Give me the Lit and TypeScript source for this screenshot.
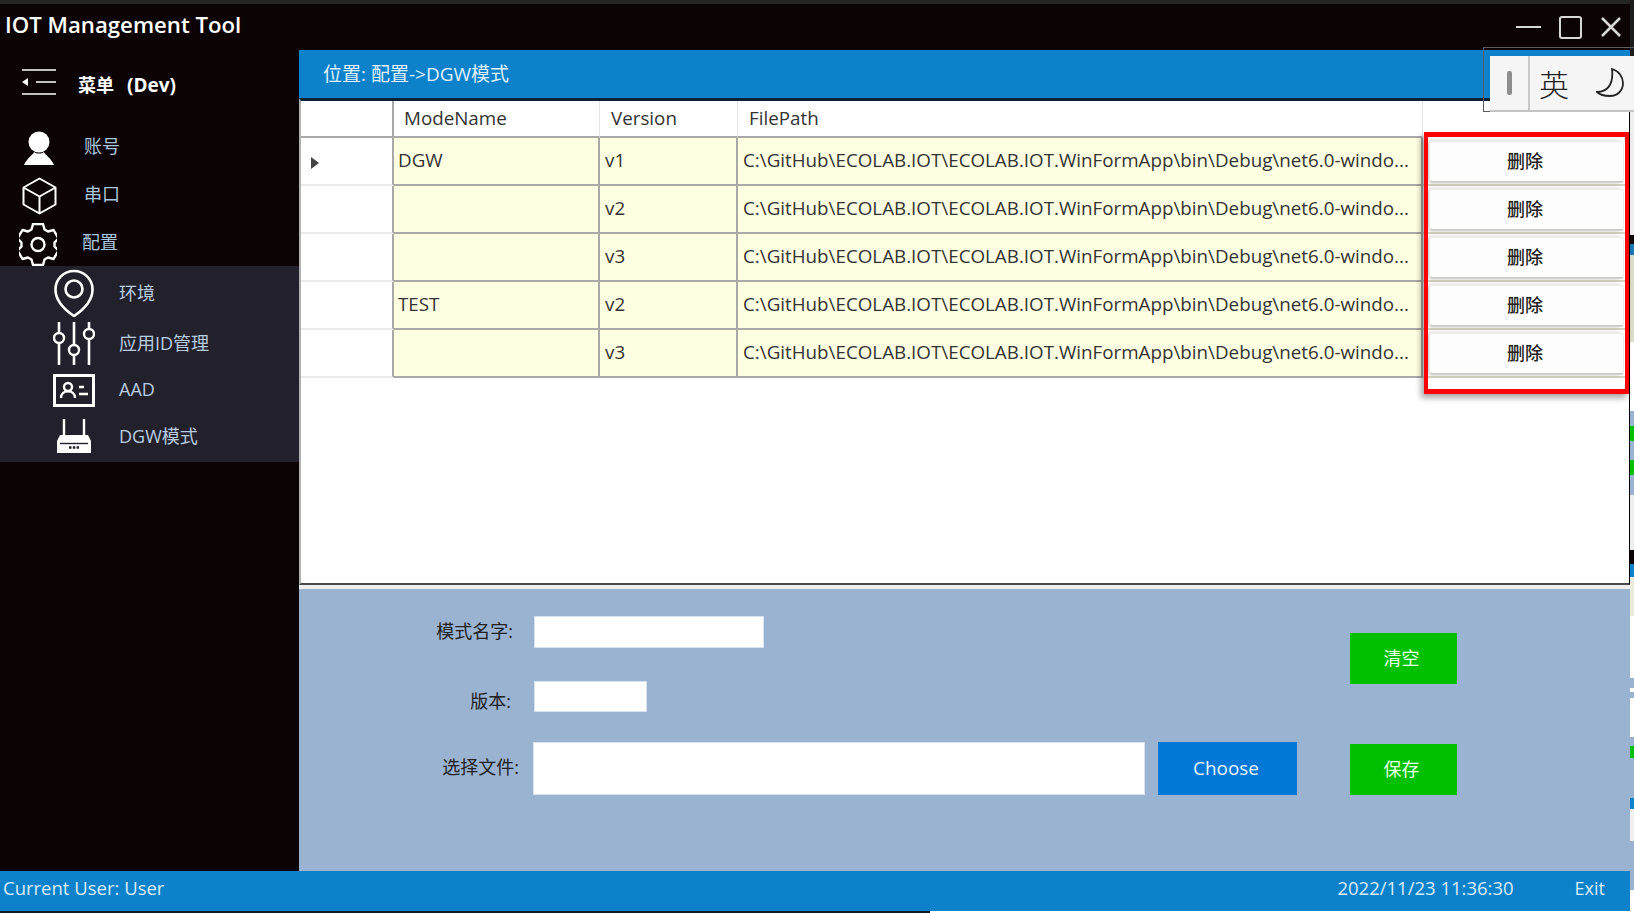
import { LitElement, html, css, svg } from 'lit';
import { customElement } from 'lit/decorators.js';

const FILE_PATH = 'C:\\GitHub\\ECOLAB.IOT\\ECOLAB.IOT.WinFormApp\\bin\\Debug\\net6.0-windo...';

const ROWS = [
  { name: 'DGW', version: 'v1', current: true },
  { name: '', version: 'v2' },
  { name: '', version: 'v3' },
  { name: 'TEST', version: 'v2' },
  { name: '', version: 'v3' },
];

// Trozo de otra ventana que asoma por la derecha: [alto, color]
const PEEK: [number, string][] = [
  [112, '#1d1d1d'], [125, '#efefef'], [9, '#140808'], [12, '#1a78b8'], [87, '#dcdccb'],
  [70, '#ffffff'], [15, '#9ab3d1'], [15, '#00c000'], [20, '#9ab3d1'], [15, '#00c000'],
  [20, '#9ab3d1'], [55, '#eeeeee'], [15, '#0c0404'], [13, '#0e81cb'], [39, '#ecebdc'],
  [63, '#ffffff'], [10, '#9ab3d1'], [4, '#ffffff'], [6, '#9ab3d1'], [39, '#ffffff'],
  [9, '#9ab3d1'], [12, '#00c000'], [41, '#9ab3d1'], [11, '#0e81cb'], [32, '#f0f0f0'],
  [50, '#9ab3d1'], [23, '#ffffff'],
];

const ICONS = {
  menu: svg`<path d="M0 1h34M14 13h20M0 25h34" stroke-width="1.6"/><path d="M6 9v8l-6-4z" fill="currentColor" stroke="none"/>`,
  user: svg`<circle cx="15" cy="11" r="10.500" fill="currentColor" stroke="none"/><path d="M10 21C9 24 3 27 0 34h30c-3-7-9-10-10-13-3 2-7 2-10 0z" fill="currentColor" stroke="none"/>`,
  box: svg`<path d="M17.500 1.500l16 9v17l-16 9-16-9v-17zM1.500 10.500l16 9 16-9M17.500 19.500v17" stroke-width="2" stroke-linejoin="round"/>`,
  gear: svg`<path d="M14 1h10l1.500 5.500 3.500 2 5.500-1.500 5 8.500-4 4v4l4 4-5 8.500-5.500-1.500-3.500 2-1.500 5.500h-10l-1.500-5.500-3.500-2-5.500 1.500-5-8.500 4-4v-4l-4-4 5-8.500 5.500 1.500 3.500-2z" stroke-width="2.400" stroke-linejoin="round"/><circle cx="19" cy="21.500" r="6.500" stroke-width="2.400"/>`,
  pin: svg`<path d="M20 47C8 39 1.500 31 1.500 20.500a18.500 18.500 0 0 1 37 0C38.500 31 32 39 20 47z" stroke-width="2.600"/><circle cx="20" cy="20" r="8.500" stroke-width="2.600"/>`,
  sliders: svg`<path d="M6 0v11M6 21v22M21 0v23M21 33v10M36 0v7M36 17v26" stroke-width="2.600"/><circle cx="6" cy="16" r="5" stroke-width="2.400"/><circle cx="21" cy="28" r="5" stroke-width="2.400"/><circle cx="36" cy="12" r="5" stroke-width="2.400"/>`,
  card: svg`<rect x="1.500" y="1.500" width="39" height="30" stroke-width="3"/><circle cx="15" cy="13" r="4" stroke-width="2.400"/><path d="M8 24c0-9 14-9 14 0M26 13h5M26 20h9" stroke-width="2.400"/>`,
  router: svg`<path d="M7 0v16M27 0v16" stroke-width="2.400"/><path d="M3 16h28l3 6v12H0V22z" fill="currentColor" stroke="none"/><path d="M3 24.500h28" stroke="#22202a" stroke-width="1.400"/><path d="M12 28.500h10" stroke="#22202a" stroke-width="2.400" stroke-dasharray="2.500 1.300"/>`,
};

@customElement('app-root')
export class AppRoot extends LitElement {
  static styles = css`
    :host {
      display: block;
      position: relative;
      width: 1634px;
      height: 913px;
      overflow: hidden;
      background: #fff;
      font-family: "Open Sans", "Noto Sans CJK SC", sans-serif;
      font-size: 18px;
    }

    .shell {
      display: flex;
      height: 100%;
    }
    .window {
      flex: 0 0 1630px;
      display: flex;
      flex-direction: column;
      background: #0c0404;
    }

    /* Barra superior */
    .top-strip {
      flex: 0 0 4px;
      background: #252525;
    }
    .titlebar {
      flex: 0 0 46px;
      display: flex;
      align-items: center;
      justify-content: space-between;
      padding-left: 5px;
    }
    .title {
      color: #fff;
      font-size: 22.200px;
      font-weight: 600;
      margin-bottom: 6px;
    }
    .win-controls {
      display: flex;
      align-items: center;
      padding-right: 9px;
      color: #d8d8d8;
    }
    .win-controls svg {
      display: block;
      fill: none;
      stroke: currentColor;
    }
    .win-controls .max { margin: 0 19px 0 18px; }

    .body {
      flex: 1;
      display: flex;
      min-height: 0;
    }

    /* Menu lateral */
    .sidebar {
      flex: 0 0 299px;
      display: flex;
      flex-direction: column;
      color: #fff;
    }
    .menu-head {
      flex: 0 0 68px;
      display: flex;
      align-items: center;
      padding-left: 22px;
      font-weight: 700;
    }
    .menu-head svg { margin: 0 22px 4px 0; }
    .menu-head .text {
      display: flex;
      align-items: baseline;
      gap: 13px;
    }
    .menu-head .dev { font-size: 19px; }
    .icon {
      display: block;
      fill: none;
      stroke: currentColor;
      color: #fff;
    }
    .nav-top {
      display: flex;
      flex-direction: column;
      padding-top: 3px;
    }
    .nav-row {
      display: flex;
      align-items: center;
      height: 48px;
      color: #a9c4de;
    }
    .nav-row .slot {
      flex: 0 0 78px;
      box-sizing: border-box;
      display: flex;
      justify-content: center;
      padding-top: 6px;
    }
    .nav-row .slot.gear { padding-right: 2px; }
    .nav-row .label { padding-left: 6px; }
    .nav-row .label.tight { padding-left: 4px; }
    .submenu {
      margin-top: 1px;
      height: 196px;
      display: flex;
      flex-direction: column;
      background: #22202a;
      padding-top: 2px;
      box-sizing: border-box;
    }
    .sub-row {
      display: flex;
      align-items: center;
      color: #b8cde0;
    }
    .sub-row .slot {
      flex: 0 0 148px;
      display: flex;
      justify-content: center;
    }
    .sub-row .label { margin: 0 0 2px -29px; }
    .sub-row.tall { height: 50px; }
    .sub-row.short { height: 44px; }
    .sub-row.mid { height: 48px; }

    /* Contenido */
    .main {
      flex: 1;
      display: flex;
      flex-direction: column;
      min-width: 0;
    }
    .crumb {
      flex: 0 0 48px;
      display: flex;
      align-items: center;
      box-sizing: border-box;
      padding: 0 0 2px 24px;
      background: #0e81cb;
      color: #dff0fb;
      font-size: 19px;
    }
    .grid-wrap {
      flex: 0 0 491px;
      box-sizing: border-box;
      border-bottom: 4px solid #eeeeee;
      background: #fff;
    }
    .grid-area {
      height: 100%;
      box-sizing: border-box;
      border-top: 3px solid #0c2233;
      border-bottom: 2px solid #4a4a4a;
      border-left: 2px solid #b0b0b0;
      border-right: 1px solid #000;
    }
    .grid {
      display: grid;
      grid-template-columns: 93px 206px 138px 685px 206px;
      grid-template-rows: 37px repeat(5, 48px);
      color: #333;
      font-size: 18.800px;
    }
    .grid > div {
      box-sizing: border-box;
      display: flex;
      align-items: center;
      min-width: 0;
    }
    .head {
      padding: 0 0 2px 11px;
      border-right: 1px solid #e4e4e4;
      border-bottom: 2px solid #a9a9a9;
    }
    .head.first { padding-left: 10px; }
    .head.corner { border-right: 2px solid #a9a9a9; }
    .head.last { border: 0; }
    .row-head {
      border-right: 2px solid #a9a9a9;
      border-bottom: 2px solid #eaeaea;
      padding-left: 10px;
    }
    .arrow {
      width: 0;
      height: 0;
      margin-top: 3px;
      border-left: 8px solid #444;
      border-top: 6.500px solid transparent;
      border-bottom: 6.500px solid transparent;
    }
    .cell {
      background: #ffffe2;
      border-right: 2px solid #a9a9a9;
      border-bottom: 2px solid #a9a9a9;
      padding: 0 0 2px 5px;
      white-space: nowrap;
    }
    .cell.name { padding-left: 4px; }
    .btn-cell {
      padding: 3px 5px 1px 6px;
      border-bottom: 2px solid #d6d6c2;
    }
    .del {
      width: 100%;
      height: 100%;
      display: flex;
      align-items: center;
      justify-content: center;
      padding: 0 3px 4px 0;
      background: #fdfdfd;
      border-radius: 4px;
      border: 1px solid #ececec;
      border-bottom: 2px solid #cfcfc4;
      box-shadow: -3px 0 5px rgba(0, 0, 0, 0.2);
      box-sizing: border-box;
      color: #222;
      font-family: "Noto Sans CJK SC", sans-serif;
      font-size: 18px;
      font-weight: 500;
    }

    /* Formulario */
    .form {
      flex: 1;
      display: flex;
      padding-top: 27px;
      background: #9ab3d1;
      color: #222;
    }
    .form-left {
      flex: 0 0 1051px;
      display: flex;
      flex-direction: column;
    }
    .field {
      display: flex;
      align-items: center;
    }
    .field label {
      flex: 0 0 235px;
      text-align: right;
      box-sizing: border-box;
    }
    .input {
      background: #fff;
      border: 1px solid #d6e2f0;
      box-sizing: border-box;
    }
    .f1 label { padding: 0 21px 4px 0; }
    .f1 .input { width: 230px; height: 32px; }
    .f2 { margin-top: 33px; }
    .f2 label { height: 31px; padding: 6px 23px 0 0; }
    .f2 .input { width: 113px; height: 31px; }
    .f3 { margin-top: 30px; }
    .f3 label { flex-basis: 234px; padding: 0 14px 5px 0; }
    .f3 .input { width: 612px; height: 53px; }
    .choose {
      width: 139px;
      height: 53px;
      box-sizing: border-box;
      margin-left: 13px;
      padding: 0 3px 2px 0;
      background: #0078d7;
      color: #e6f2fb;
      font-size: 18.900px;
      display: flex;
      align-items: center;
      justify-content: center;
    }
    .form-right {
      display: flex;
      flex-direction: column;
      padding-top: 17px;
      gap: 60px;
    }
    .green {
      width: 107px;
      height: 51px;
      background: #00c000;
      color: #e9ffe9;
      display: flex;
      align-items: center;
      justify-content: center;
      box-sizing: border-box;
      padding: 0 4px 3px 0;
    }

    /* Barra de estado */
    .status {
      flex: 0 0 40px;
      display: flex;
      align-items: center;
      box-sizing: border-box;
      background: #0e81cb;
      color: #d6ebf8;
      font-size: 18.500px;
      padding: 0 0 7px 3px;
    }
    .status .time { margin-left: auto; }
    .status .exit { margin: 0 25px 0 61px; font-size: 18px; }
    .bottom-strip {
      flex: 0 0 2px;
      display: flex;
      background: #fff;
    }
    .bottom-strip i {
      display: block;
      width: 930px;
      background: #0c1a2a;
    }

    /* Otra ventana detras */
    .peek {
      flex: 1;
      display: flex;
      flex-direction: column;
    }

    /* Capas */
    .marker {
      position: absolute;
      left: 1424px;
      top: 132px;
      width: 205px;
      height: 262px;
      box-sizing: border-box;
      border: solid #f00;
      border-width: 5px 4px;
      box-shadow: -3px 4px 6px rgba(0, 0, 0, 0.35);
      pointer-events: none;
    }
    .ime {
      position: absolute;
      left: 1483px;
      top: 47px;
      width: 151px;
      height: 65px;
      box-sizing: border-box;
      border: 1px solid #5c5c5c;
      border-right: 0;
      padding: 8px 0 0 6px;
    }
    .ime-bar {
      height: 56px;
      display: flex;
      background: #f5f5f5;
      border-bottom: 2px solid #c4c4c4;
      box-sizing: border-box;
      color: #222;
    }
    .ime-grip {
      flex: 0 0 38px;
      display: flex;
      align-items: center;
      justify-content: center;
      border-right: 2px solid #c8c8c8;
    }
    .ime-grip i {
      display: block;
      width: 5px;
      height: 24px;
      border-radius: 2px;
      background: #8e8e8e;
    }
    .ime-lang {
      flex: 0 0 39px;
      box-sizing: border-box;
      padding-left: 9px;
      font-size: 30px;
      line-height: 54px;
      font-family: "Noto Sans CJK SC", sans-serif;
      font-weight: 300;
    }
    .ime-moon {
      margin: 12px 0 0 27px;
      fill: none;
      stroke: #222;
      display: block;
    }
  `;

  private icon(name: keyof typeof ICONS, w: number, h: number) {
    return html`<svg class="icon" width=${w} height=${h} viewBox="0 0 ${w} ${h}">${ICONS[name]}</svg>`;
  }

  private renderGrid() {
    return html`
      <div class="grid">
        <div class="head corner"></div>
        <div class="head first">ModeName</div>
        <div class="head">Version</div>
        <div class="head">FilePath</div>
        <div class="head last"></div>
        ${ROWS.map(
          (r) => html`
            <div class="row-head">${r.current ? html`<div class="arrow"></div>` : ''}</div>
            <div class="cell name">${r.name}</div>
            <div class="cell">${r.version}</div>
            <div class="cell">${FILE_PATH}</div>
            <div class="btn-cell"><div class="del">删除</div></div>
          `,
        )}
      </div>
    `;
  }

  render() {
    return html`
      <div class="shell">
        <div class="window">
          <div class="top-strip"></div>
          <div class="titlebar">
            <div class="title">IOT Management Tool</div>
            <div class="win-controls">
              <svg width="25" height="24" viewBox="0 0 25 24"><path d="M0 12h25" stroke-width="2"/></svg>
              <svg class="max" width="23" height="23" viewBox="0 0 23 23"><rect x="1" y="1" width="21" height="21" rx="2" stroke-width="2"/></svg>
              <svg width="20" height="20" viewBox="0 0 20 20"><path d="M1 1l18 18M19 1L1 19" stroke-width="2.500"/></svg>
            </div>
          </div>
          <div class="body">
            <div class="sidebar">
              <div class="menu-head">
                ${this.icon('menu', 34, 26)}
                <div class="text"><span>菜单</span><span class="dev">(Dev)</span></div>
              </div>
              <div class="nav-top">
                <div class="nav-row">
                  <div class="slot">${this.icon('user', 30, 34)}</div>
                  <span class="label">账号</span>
                </div>
                <div class="nav-row">
                  <div class="slot">${this.icon('box', 35, 38)}</div>
                  <span class="label">串口</span>
                </div>
                <div class="nav-row">
                  <div class="slot gear">${this.icon('gear', 38, 43)}</div>
                  <span class="label tight">配置</span>
                </div>
              </div>
              <div class="submenu">
                <div class="sub-row tall">
                  <div class="slot">${this.icon('pin', 40, 48)}</div>
                  <span class="label">环境</span>
                </div>
                <div class="sub-row tall">
                  <div class="slot">${this.icon('sliders', 42, 43)}</div>
                  <span class="label">应用ID管理</span>
                </div>
                <div class="sub-row short">
                  <div class="slot">${this.icon('card', 42, 33)}</div>
                  <span class="label">AAD</span>
                </div>
                <div class="sub-row mid">
                  <div class="slot">${this.icon('router', 34, 34)}</div>
                  <span class="label">DGW模式</span>
                </div>
              </div>
            </div>
            <div class="main">
              <div class="crumb">位置: 配置->DGW模式</div>
              <div class="grid-wrap"><div class="grid-area">${this.renderGrid()}</div></div>
              <div class="form">
                <div class="form-left">
                  <div class="field f1"><label>模式名字:</label><div class="input"></div></div>
                  <div class="field f2"><label>版本:</label><div class="input"></div></div>
                  <div class="field f3">
                    <label>选择文件:</label>
                    <div class="input"></div>
                    <div class="choose">Choose</div>
                  </div>
                </div>
                <div class="form-right">
                  <div class="green">清空</div>
                  <div class="green">保存</div>
                </div>
              </div>
            </div>
          </div>
          <div class="status">
            <span>Current User: User</span>
            <span class="time">2022/11/23 11:36:30</span>
            <span class="exit">Exit</span>
          </div>
          <div class="bottom-strip"><i></i></div>
        </div>
        <div class="peek">
          ${PEEK.map(([h, c]) => html`<div style="height:${h}px;background:${c}"></div>`)}
        </div>
      </div>
      <div class="marker"></div>
      <div class="ime">
        <div class="ime-bar">
          <div class="ime-grip"><i></i></div>
          <div class="ime-lang">英</div>
          <svg class="ime-moon" width="28" height="30" viewBox="0 0 28 30">
            <path d="M16 1C23 3 27 9 27 15C27 23 21 28 14 28C8 28 3 26 1 24C10 24 18 18 16 1z" stroke-width="1.800"/>
          </svg>
        </div>
      </div>
    `;
  }
}
